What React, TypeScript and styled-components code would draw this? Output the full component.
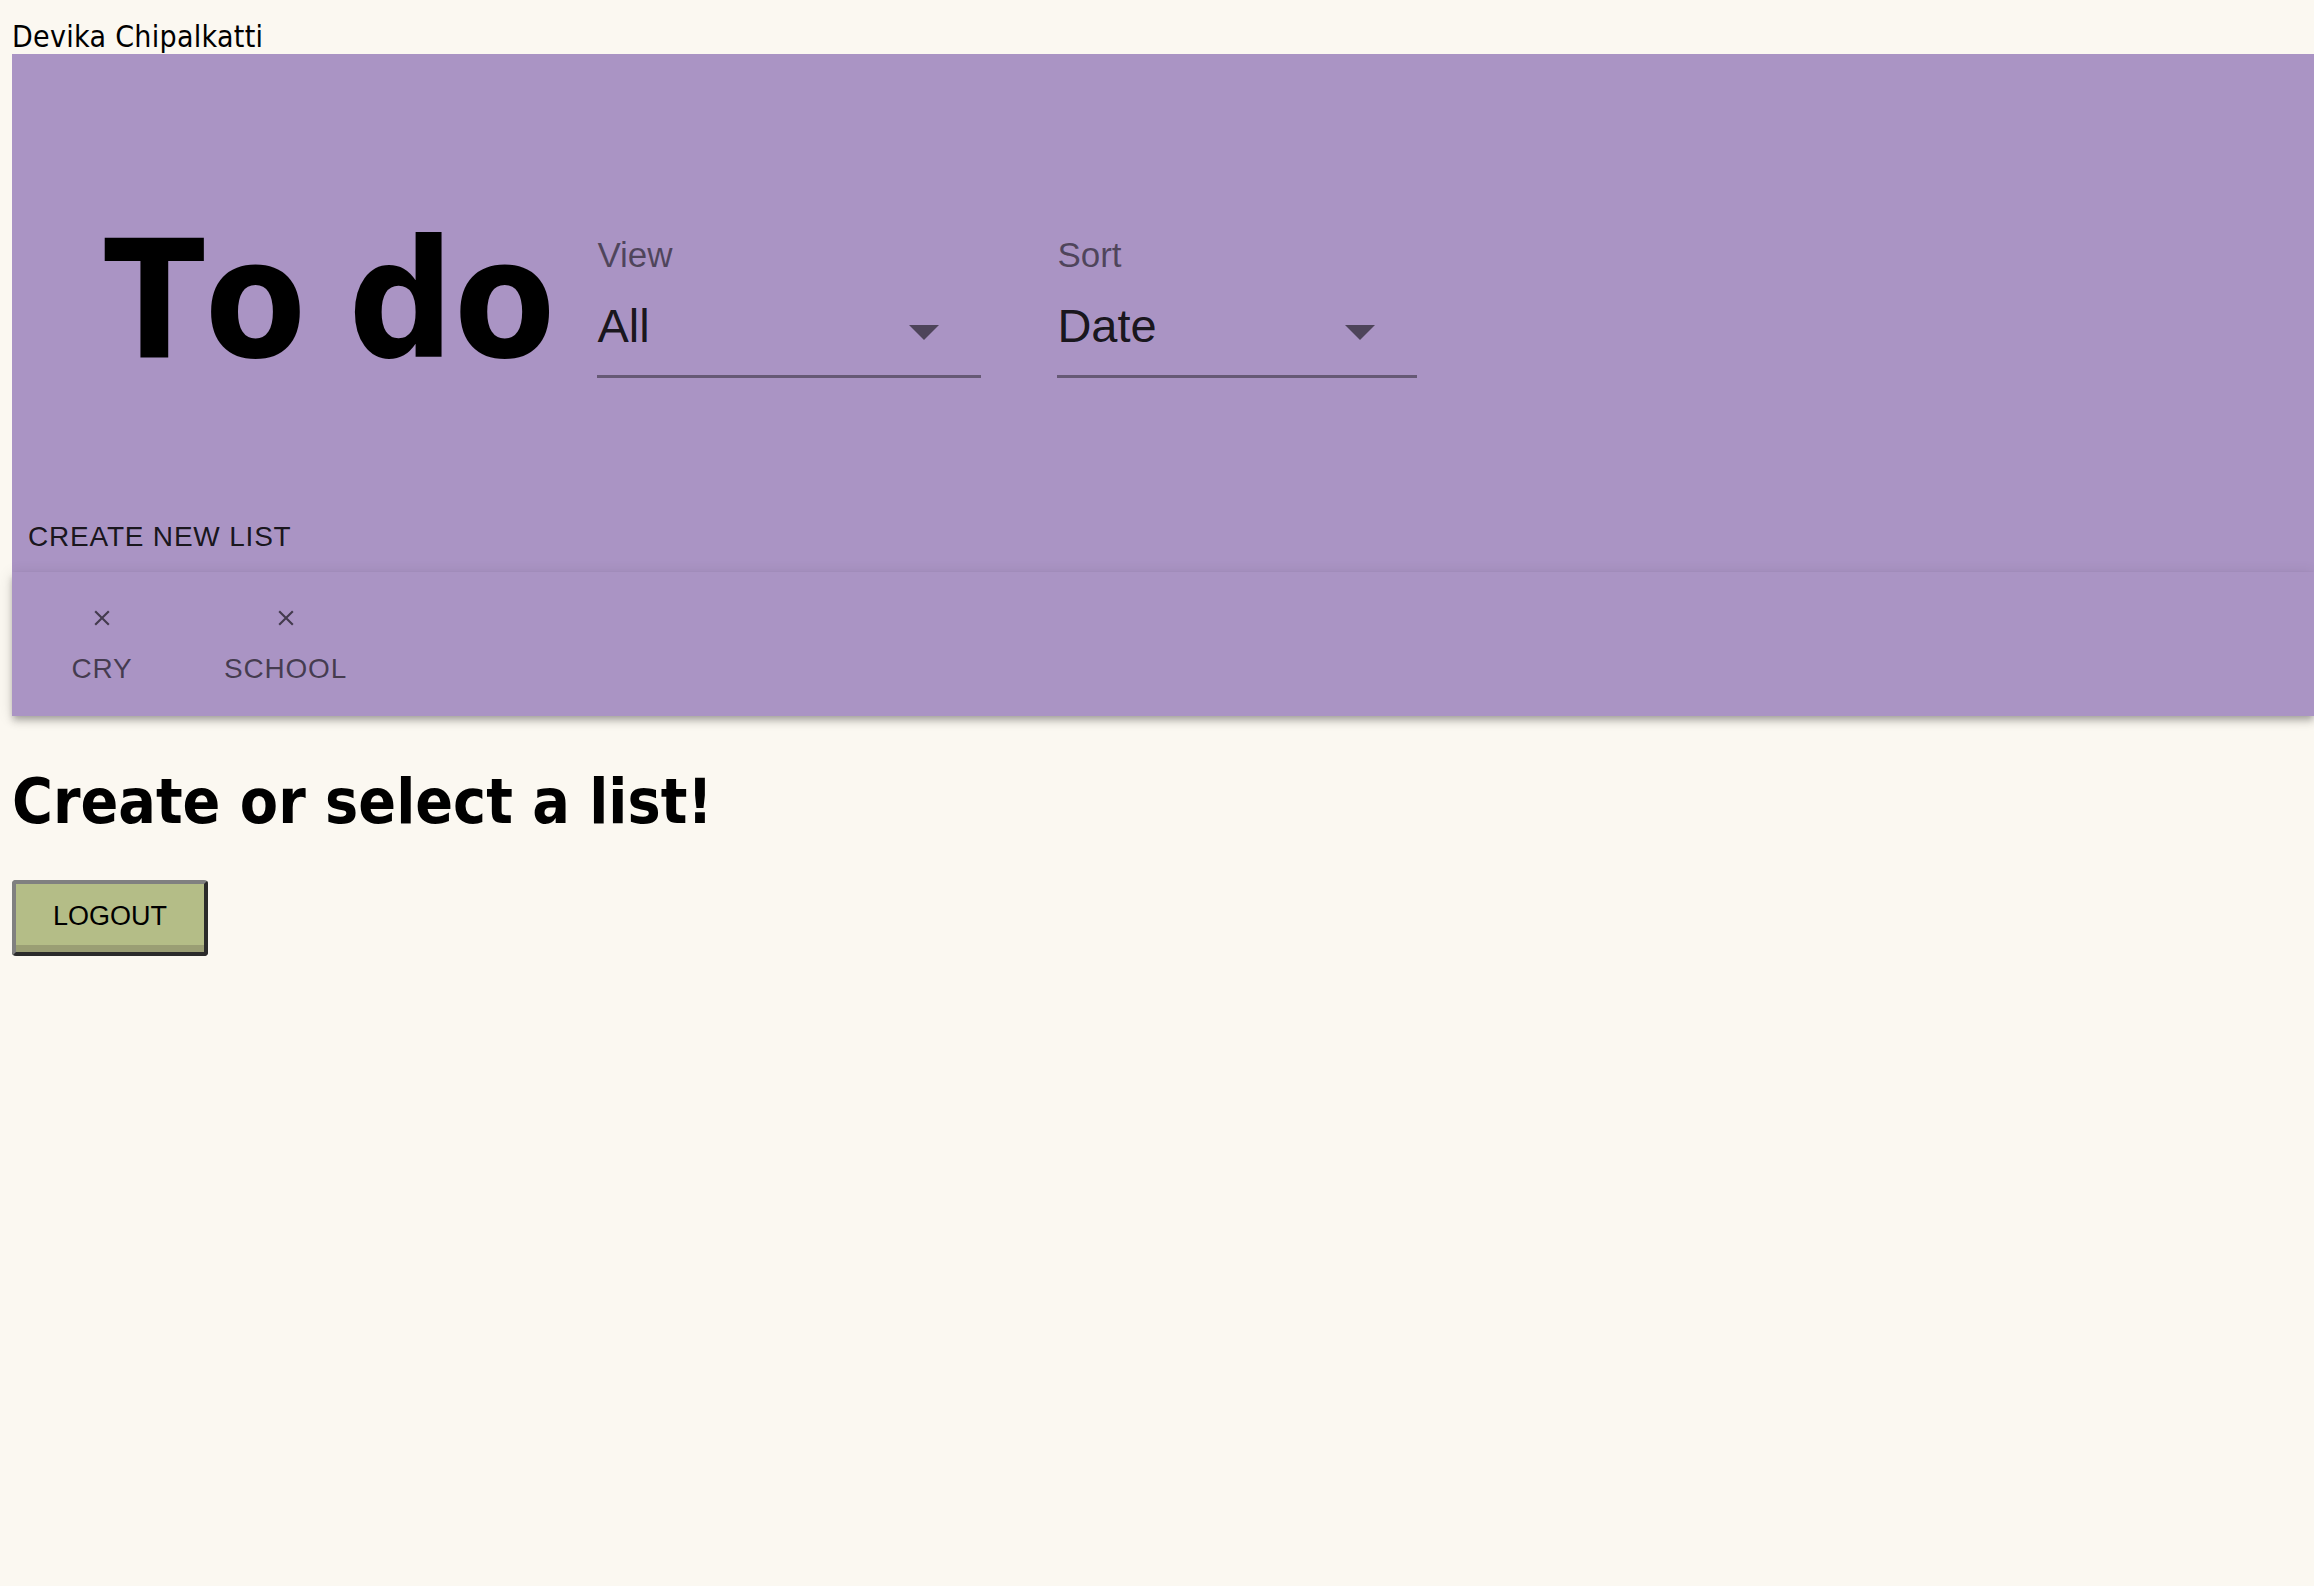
import React from "react";
import styled, { createGlobalStyle } from "styled-components";

const GlobalStyle = createGlobalStyle`
  html, body {
    margin: 0;
    padding: 0;
    background: #fbf8f1;
  }
  body {
    font-family: "DejaVu Sans Condensed", "DejaVu Sans", sans-serif;
    font-stretch: condensed;
  }
`;

const PURPLE = "#aa94c4";

const Page = styled.div`
  padding: 12px 0 0 12px;
`;

const UserName = styled.div`
  font-family: "DejaVu Sans Condensed", "DejaVu Sans", sans-serif;
  font-stretch: condensed;
  font-size: 30px;
  letter-spacing: 0.3px;
  height: 42px;
  line-height: 49px;
  color: #000;
`;

const Header = styled.header`
  background: ${PURPLE};
  display: flex;
  flex-direction: column;
`;

const TopRow = styled.div`
  display: flex;
  align-items: flex-start;
  padding: 165px 0 0 92px;
`;

const Title = styled.h1`
  margin: 0 42px 0 0;
  font-family: "DejaVu Sans Condensed", "DejaVu Sans", sans-serif;
  font-stretch: condensed;
  font-weight: 700;
  font-size: 164px;
  line-height: 164px;
  font-kerning: none;
  word-spacing: -9px;
  color: #000;
  white-space: nowrap;
`;

const SelectGroup = styled.div`
  display: flex;
  gap: 76px;
  margin-top: 18px;
`;

const SelectField = styled.div<{ $w: number }>`
  width: ${(p) => p.$w}px;
  display: flex;
  flex-direction: column;
`;

const Label = styled.label`
  font-family: "Liberation Sans", Arial, sans-serif;
  font-size: 35px;
  line-height: 35px;
  color: rgba(0, 0, 0, 0.54);
`;

const ValueRow = styled.div`
  display: flex;
  align-items: center;
  justify-content: space-between;
  height: 56px;
  margin-top: 26px;
  padding: 0 42px 21px 0;
  border-bottom: 3px solid rgba(0, 0, 0, 0.4);
`;

const Value = styled.span`
  font-family: "Liberation Sans", Arial, sans-serif;
  font-size: 47px;
  line-height: 56px;
  color: rgba(0, 0, 0, 0.87);
`;

const Arrow = styled.span`
  width: 0;
  height: 0;
  margin-top: 12px;
  border-left: 15px solid transparent;
  border-right: 15px solid transparent;
  border-top: 15px solid rgba(0, 0, 0, 0.54);
`;

const CreateButton = styled.button`
  align-self: flex-start;
  margin: 120px 0 2px;
  padding: 9px 16px;
  background: none;
  border: 0;
  font-family: "Liberation Sans", Arial, sans-serif;
  font-size: 28px;
  line-height: 49px;
  letter-spacing: 0.8px;
  text-transform: uppercase;
  color: rgba(0, 0, 0, 0.87);
  cursor: pointer;
`;

const TabsBar = styled.nav`
  position: relative;
  z-index: 1;
  display: flex;
  height: 144px;
  background: ${PURPLE};
  box-shadow: 0px 3px 6px -1.5px rgba(0, 0, 0, 0.2),
    0px 6px 7.4px 0px rgba(0, 0, 0, 0.14),
    0px 1.5px 15px 0px rgba(0, 0, 0, 0.12);
`;

const Tab = styled.button`
  min-width: 180px;
  padding: 3px 32px 0;
  display: flex;
  flex-direction: column;
  align-items: center;
  justify-content: center;
  gap: 20px;
  background: none;
  border: 0;
  color: rgba(0, 0, 0, 0.6);
  font-family: "Liberation Sans", Arial, sans-serif;
  font-size: 28px;
  line-height: 35px;
  letter-spacing: 0.8px;
  text-transform: uppercase;
  cursor: pointer;
`;

const Heading = styled.h2`
  margin: 49px 0 0;
  font-family: "DejaVu Sans Condensed", "DejaVu Sans", sans-serif;
  font-stretch: condensed;
  font-weight: 700;
  font-size: 62px;
  line-height: 74px;
  color: #000;
`;

const LogoutButton = styled.button`
  display: block;
  margin-top: 41px;
  width: 196px;
  height: 76px;
  box-sizing: border-box;
  padding: 0 0 3px;
  background: #b4bd87;
  border: 4px solid;
  border-color: #808080 #2b2b2b #2b2b2b #808080;
  border-radius: 4px;
  box-shadow: inset 0 -7px 0 #9a9e74;
  font-family: "Liberation Sans", Arial, sans-serif;
  font-size: 27px;
  color: #000;
  cursor: pointer;
`;

const ClearIcon = () => (
  <svg width="26" height="26" viewBox="0 0 24 24" fill="currentColor" aria-hidden="true">
    <path d="M19 6.41 17.59 5 12 10.59 6.41 5 5 6.41 10.59 12 5 17.59 6.41 19 12 13.41 17.59 19 19 17.59 13.41 12z" />
  </svg>
);

const lists = ["cry", "school"];

export default function App() {
  return (
    <>
      <GlobalStyle />
      <Page>
        <UserName>Devika Chipalkatti</UserName>
        <Header>
          <TopRow>
            <Title>To do</Title>
            <SelectGroup>
              <SelectField $w={384}>
                <Label>View</Label>
                <ValueRow>
                  <Value>All</Value>
                  <Arrow />
                </ValueRow>
              </SelectField>
              <SelectField $w={360}>
                <Label>Sort</Label>
                <ValueRow>
                  <Value>Date</Value>
                  <Arrow />
                </ValueRow>
              </SelectField>
            </SelectGroup>
          </TopRow>
          <CreateButton>Create new list</CreateButton>
        </Header>
        <TabsBar>
          {lists.map((l) => (
            <Tab key={l}>
              <ClearIcon />
              <span>{l}</span>
            </Tab>
          ))}
        </TabsBar>
        <Heading>Create or select a list!</Heading>
        <LogoutButton>LOGOUT</LogoutButton>
      </Page>
    </>
  );
}
